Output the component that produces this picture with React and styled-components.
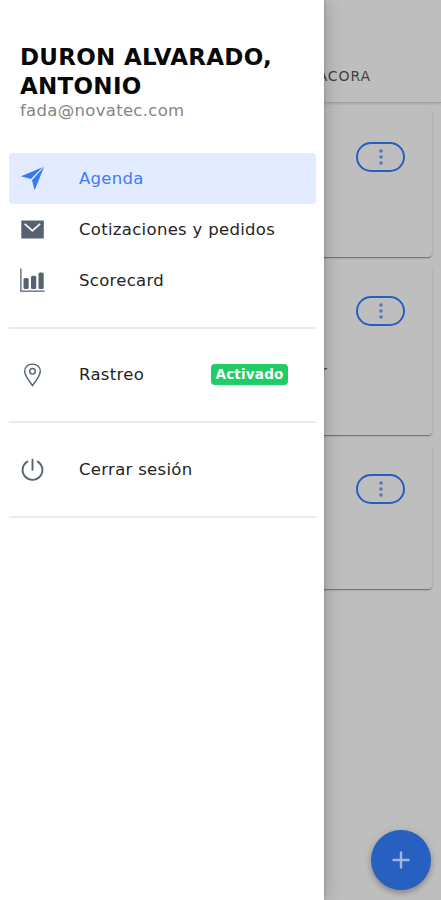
import styled, { createGlobalStyle } from "styled-components";

const GlobalStyle = createGlobalStyle`
  * {
    box-sizing: border-box;
  }

  body {
    margin: 0;
    font-family: "DejaVu Sans", Verdana, sans-serif;
    overflow: hidden;
  }
`;

const Screen = styled.div`
  position: relative;
  height: 900px;
  background: #bebebe;
  overflow: hidden;
`;

const Toolbar = styled.header`
  display: flex;
  align-items: flex-end;
  justify-content: flex-end;
  height: 103px;
  padding: 0 70px 18px 0;
  border-bottom: 1px solid #a0a0a0;
  box-shadow: 0 1px 2px rgba(0, 0, 0, 0.12);
`;

const Title = styled.span`
  color: #414141;
  font-size: 14px;
  line-height: 16px;
  letter-spacing: 0.9px;
`;

const CardList = styled.main`
  display: flex;
  flex-direction: column;
  gap: 10px;
  padding: 5px 9px 0;
`;

const Card = styled.article`
  position: relative;
  display: flex;
  align-items: flex-start;
  justify-content: flex-end;
  height: ${(props) => props.$height}px;
  padding: ${(props) => props.$top}px 27px 0 0;
  border-radius: 4px;
  box-shadow: 0 2px 1px -1px rgba(0, 0, 0, 0.25), 0 1px 2px rgba(0, 0, 0, 0.25);
`;

const CardNote = styled.span`
  position: absolute;
  right: 105px;
  top: 95px;
  color: #404040;
  font-size: 16px;
  line-height: 20px;
`;

const MoreButton = styled.button`
  display: flex;
  align-items: center;
  justify-content: center;
  width: 49px;
  height: 30px;
  padding: 0;
  border: 2px solid #265fc0;
  border-radius: 15px;
  background: none;
  color: #5478c0;
`;

const Fab = styled.button`
  position: absolute;
  right: 10px;
  bottom: 10px;
  display: flex;
  align-items: center;
  justify-content: center;
  width: 60px;
  height: 60px;
  padding: 0;
  border: none;
  border-radius: 50%;
  background: #2860c1;
  color: #a3b7dc;
  box-shadow: 0 3px 5px rgba(0, 0, 0, 0.22), 0 1px 10px rgba(0, 0, 0, 0.12);
`;

const Drawer = styled.aside`
  position: absolute;
  top: 0;
  left: 0;
  width: 324px;
  height: 100%;
  padding: 43px 8px 0 9px;
  background: #fff;
  box-shadow: 0 0 18px rgba(0, 0, 0, 0.24), 1px 0 2px rgba(0, 0, 0, 0.1);
`;

const Profile = styled.div`
  height: 110px;
  padding-left: 11px;
`;

const UserName = styled.h1`
  margin: 0;
  color: #080808;
  font-size: 23px;
  font-weight: 700;
  line-height: 28.5px;
  letter-spacing: 0.27px;
`;

const Email = styled.p`
  margin: 1px 0 0;
  color: #858585;
  font-size: 16.5px;
  line-height: 20px;
  letter-spacing: 0.3px;
`;

const MenuGroup = styled.nav`
  padding: ${(props) => props.$pad || "0"};
  border-bottom: 2px solid #ebebeb;
`;

const MenuItem = styled.a`
  display: flex;
  align-items: center;
  height: 51px;
  padding: 0 28px 0 11px;
  border-radius: 4px;
  background: ${(props) => (props.$active ? "#e2ebff" : "transparent")};
  color: ${(props) => (props.$active ? "#3f7df5" : "#242424")};
  font-size: 16.5px;
  letter-spacing: 0.3px;
`;

const MenuIcon = styled.svg`
  width: 25px;
  height: 26px;
  margin-right: 34px;
  color: ${(props) => (props.$active ? "#377af5" : "#56626f")};
`;

const Badge = styled.span`
  margin-left: auto;
  width: 77px;
  height: 21px;
  border-radius: 4px;
  background: #20cc65;
  color: #fff;
  font-size: 13.5px;
  font-weight: 700;
  line-height: 20px;
  letter-spacing: 0.2px;
  text-align: center;
`;

const icons = {
  agenda: (
    <path fill="currentColor" d="M24.2.8 14.6 24.2 12 14.3ZM22.6 1.2 10.9 13.1 1 10.3Z" />
  ),
  orders: (
    <>
      <path fill="currentColor" d="M1.3 3.5h22.5v18H1.3z" />
      <path fill="none" stroke="#f0f3f7" strokeWidth="1.9" d="m4.7 6.9 7.7 6.8 7.7-6.8" />
    </>
  ),
  scorecard: (
    <>
      <path fill="none" stroke="currentColor" strokeWidth="1.3" d="M.9.5v22.7h23.6" />
      <g fill="currentColor">
        <rect x="3.5" y="10" width="5.2" height="11" rx="1.5" />
        <rect x="11" y="7.8" width="5.2" height="13.2" rx="1.5" />
        <rect x="18.5" y="4.5" width="5.2" height="16.5" rx="1.5" />
      </g>
    </>
  ),
  tracking: (
    <g fill="none" stroke="currentColor" strokeWidth="1.4">
      <path d="M12.5 23.5C9.5 19.5 4.7 13.7 4.7 9.3c0-4.3 3.4-7.2 7.8-7.2s7.8 2.9 7.8 7.2c0 4.4-4.8 10.2-7.8 14.2Z" />
      <circle cx="12.5" cy="9.3" r="2.8" />
    </g>
  ),
  logout: (
    <path
      fill="none"
      stroke="currentColor"
      strokeWidth="1.9"
      strokeLinecap="round"
      d="M12.5 2.8v10M7.3 4.600a9.900 9.900 0 1 0 10.400 0"
    />
  ),
};

const cards = [
  { height: 149, top: 34 },
  { height: 168, top: 29, note: "r" },
  { height: 144, top: 29 },
];

function Item({ icon, label, active, badge }) {
  return (
    <MenuItem $active={active}>
      <MenuIcon viewBox="0 0 25 26" $active={active}>
        {icons[icon]}
      </MenuIcon>
      {label}
      {badge && <Badge>{badge}</Badge>}
    </MenuItem>
  );
}

export default function App() {
  return (
    <Screen>
      <GlobalStyle />
      <Toolbar>
        <Title>BITÁCORA</Title>
      </Toolbar>
      <CardList>
        {cards.map((card, i) => (
          <Card key={i} $height={card.height} $top={card.top}>
            {card.note && <CardNote>{card.note}</CardNote>}
            <MoreButton>
              <svg width="6" height="18" viewBox="0 0 6 18" fill="currentColor">
                <circle cx="3" cy="3" r="1.8" />
                <circle cx="3" cy="9" r="1.8" />
                <circle cx="3" cy="15" r="1.8" />
              </svg>
            </MoreButton>
          </Card>
        ))}
      </CardList>
      <Fab>
        <svg width="18" height="18" viewBox="0 0 18 18" stroke="currentColor" strokeWidth="2.4">
          <path d="M9 .5v17M.5 9h17" />
        </svg>
      </Fab>

      {/* Side menu, open over the page */}
      <Drawer>
        <Profile>
          <UserName>DURON ALVARADO, ANTONIO</UserName>
          <Email>fada@novatec.com</Email>
        </Profile>
        <MenuGroup $pad="0 0 21px">
          <Item icon="agenda" label="Agenda" active />
          <Item icon="orders" label="Cotizaciones y pedidos" />
          <Item icon="scorecard" label="Scorecard" />
        </MenuGroup>
        <MenuGroup $pad="20px 0 21px">
          <Item icon="tracking" label="Rastreo" badge="Activado" />
        </MenuGroup>
        <MenuGroup $pad="21px 0">
          <Item icon="logout" label="Cerrar sesión" />
        </MenuGroup>
      </Drawer>
    </Screen>
  );
}
